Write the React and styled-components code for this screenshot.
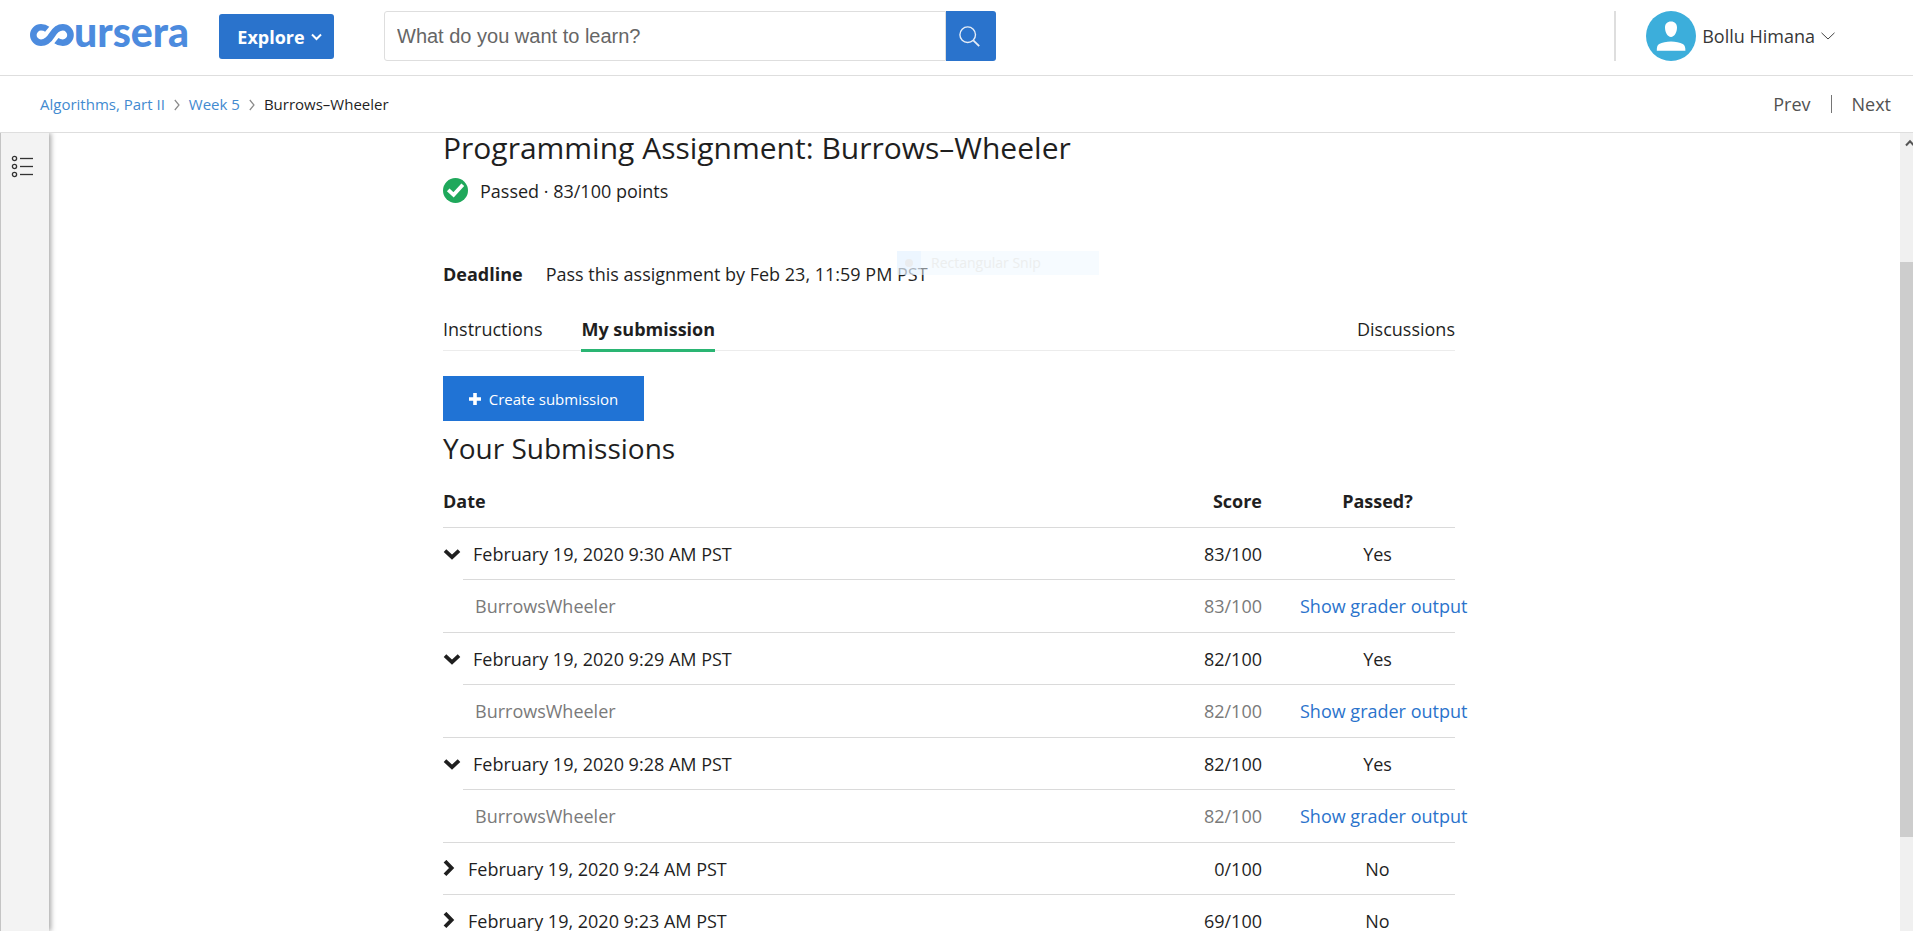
import React, { useState } from 'react';
import styled, { createGlobalStyle } from 'styled-components';

const GlobalStyle = createGlobalStyle`
  *, *::before, *::after { box-sizing: border-box; }
  body {
    margin: 0;
    background: #fff;
    color: #1f1f1f;
    font-family: "Open Sans", "Noto Sans", sans-serif;
    font-size: 18px;
    line-height: 24px;
  }
  a { color: inherit; text-decoration: none; }
  button { font: inherit; cursor: pointer; }
`;

const Shell = styled.div`
  display: flex;
  flex-direction: column;
  height: 100vh;
  overflow: hidden;
`;

/* ---------- top bar ---------- */

const TopBar = styled.header`
  display: flex;
  align-items: flex-start;
  flex: none;
  height: 76px;
  padding: 11px 78px 0 30px;
  border-bottom: 1px solid #dedede;
`;

const LogoLink = styled.a`
  display: flex;
  align-items: center;
  width: 159px;
  height: 48px;
  color: #4c8bde;
  svg { flex: none; }
`;

const LogoText = styled.span`
  font-family: Lato, sans-serif;
  font-weight: 900;
  font-size: 41px;
  line-height: 40px;
  margin-top: -6px;
`;

const ExploreButton = styled.button`
  display: flex;
  align-items: center;
  justify-content: center;
  gap: 6px;
  width: 115px;
  height: 45px;
  margin: 3px 0 0 30px;
  padding: 0 0 0 6px;
  border: 0;
  border-radius: 3px;
  background: #2a73cc;
  color: #fff;
  font-weight: 700;
`;

const SearchForm = styled.form`
  display: flex;
  width: 612px;
  height: 50px;
  margin-left: 50px;
`;

const SearchInput = styled.input`
  flex: 1;
  min-width: 0;
  padding: 0 12px;
  border: 1px solid #dedede;
  border-radius: 3px 0 0 3px;
  font-family: "Liberation Sans", sans-serif;
  font-size: 20px;
  color: #333;
  outline: none;
  &::placeholder { color: #666; opacity: 1; }
`;

const SearchButton = styled.button`
  display: grid;
  place-items: center;
  width: 50px;
  padding: 0 4px 0 0;
  border: 0;
  border-radius: 0 3px 3px 0;
  background: #2a73cc;
`;

const Account = styled.div`
  display: flex;
  height: 50px;
  margin-left: auto;
  padding-left: 30px;
  border-left: 2px solid #dedede;
`;

const AccountButton = styled.button`
  display: flex;
  align-items: center;
  padding: 0;
  border: 0;
  background: none;
  color: #373737;
  span { margin: 0 6px; }
`;

/* ---------- breadcrumb bar ---------- */

const CrumbBar = styled.div`
  display: flex;
  align-items: center;
  justify-content: space-between;
  flex: none;
  height: 57px;
  padding: 0 22px 0 40px;
  border-bottom: 1px solid #dedede;
`;

const Crumbs = styled.nav`
  display: flex;
  align-items: center;
  gap: 9px;
  font-size: 15px;
  a { color: #428ad0; }
  svg { margin-top: 2px; }
`;

const Pager = styled.nav`
  display: flex;
  align-items: center;
  color: #525252;
  a + a {
    display: flex;
    align-items: center;
  }
  a + a::before {
    content: "";
    width: 1px;
    height: 18px;
    margin: 0 20px;
    background: #757575;
  }
`;

/* ---------- body ---------- */

const Body = styled.div`
  display: flex;
  flex: 1;
  min-height: 0;
`;

const Rail = styled.aside`
  flex: none;
  width: 49px;
  padding: 22px 0 0 10px;
  border-left: 1px solid #c4c4c4;
  background: #f3f3f3;
  box-shadow: 2px 0 5px rgba(0, 0, 0, 0.35);
  clip-path: inset(0 -8px 0 0);
`;

const RailButton = styled.button`
  display: block;
  padding: 0;
  border: 0;
  background: none;
  svg { display: block; }
`;

const Viewport = styled.main`
  flex: 1;
  min-width: 0;
  padding-right: 51px;
`;

const Content = styled.div`
  max-width: 1012px;
  margin: 0 auto;
`;

const ScrollTrack = styled.div`
  display: flex;
  flex-direction: column;
  flex: none;
  width: 13px;
  background: #f0f0f0;
  overflow: hidden;
`;

const ScrollLead = styled.div`
  flex: 129 0 0;
  min-height: 0;
  padding-left: 5px;
  svg { display: block; margin-top: 5px; }
`;
const ScrollThumb = styled.div`
  flex: 575 0 0;
  background: #cdcdcd;
`;
const ScrollTail = styled.div`
  flex: 94 0 0;
`;

const Title = styled.h1`
  margin: 0;
  font-size: 30px;
  line-height: 30px;
  font-weight: 400;
`;

const Status = styled.div`
  display: flex;
  align-items: center;
  gap: 12px;
  height: 25px;
  margin-top: 15px;
`;

const Deadline = styled.div`
  position: relative;
  display: flex;
  gap: 23px;
  margin-top: 59px;
`;

const SnipGhost = styled.div`
  position: absolute;
  left: 454px;
  bottom: 11px;
  display: flex;
  align-items: center;
  width: 202px;
  height: 24px;
  background: rgba(238, 247, 255, 0.5);
  color: #eceeee;
  font-size: 14px;
`;

const SnipMark = styled.span`
  display: grid;
  place-items: center;
  width: 24px;
  height: 24px;
  margin-right: 10px;
  background: rgba(226, 240, 255, 0.4);
  &::before {
    content: "";
    width: 8px;
    height: 8px;
    border-radius: 50%;
    background: #eaecee;
  }
`;

const Tabs = styled.nav`
  display: flex;
  gap: 39px;
  height: 40px;
  margin-top: 25px;
  margin-bottom: 25px;
  border-bottom: 1px solid #ececec;
`;

const Tab = styled.a`
  height: 41px;
  padding-top: 6px;
  font-weight: ${({ $active }) => ($active ? 700 : 400)};
  border-bottom: 3px solid ${({ $active }) => ($active ? '#2ab573' : 'transparent')};
  margin-left: ${({ $end }) => ($end ? 'auto' : '0')};
`;

const CreateButton = styled.button`
  display: flex;
  align-items: center;
  justify-content: center;
  gap: 8px;
  width: 201px;
  height: 45px;
  padding: 0;
  border: 0;
  background: #2073d5;
  color: #fff;
  font-size: 15px;
`;

const SectionTitle = styled.h2`
  margin: 7px 0 0;
  font-size: 28px;
  line-height: 40px;
  font-weight: 400;
`;

const Table = styled.table`
  width: 100%;
  margin-top: 7px;
  table-layout: fixed;
  border-collapse: separate;
  border-spacing: 0;
`;

const DateCol = styled.col``;
const IndentCol = styled.col`
  width: 20px;
`;
const ScoreCol = styled.col`
  width: 160px;
`;
const PassedCol = styled.col`
  width: 155px;
`;

const HeadCell = styled.th`
  height: 52px;
  padding: ${({ $pad }) => $pad || '0'};
  text-align: ${({ $align }) => $align || 'left'};
  font-weight: 700;
`;

const Cell = styled.td`
  height: ${({ $detail }) => ($detail ? '53px' : '52px')};
  padding: ${({ $pad }) => $pad || '0'};
  border-top: ${({ $bare }) => ($bare ? '0' : '1px solid #dadada')};
  text-align: ${({ $align }) => $align || 'left'};
  color: ${({ $detail }) => ($detail ? '#7a7a7a' : '#1f1f1f')};
  white-space: nowrap;
`;

const RowToggle = styled.button`
  display: flex;
  align-items: center;
  gap: 12px;
  padding: 0;
  border: 0;
  background: none;
  color: #1f1f1f;
`;

const GraderLink = styled.a`
  color: #2a73cc;
`;

/* ---------- drawings ---------- */

const LogoMark = () => (
  <svg width="44" height="22" viewBox="0 0 44 22" fill="none" stroke="currentColor" strokeWidth="6.6" aria-hidden="true">
    <path d="M17.2 5.2C15.6 3.9 13.4 3.3 11 3.3A7.7 7.7 0 0 0 11 18.7C17 18.7 19.6 15 22 11C24.4 7 27 3.300 32.800 3.300A7.700 7.700 0 0 1 32.800 18.700C30.200 18.700 28 17.900 26.400 16.600" />
  </svg>
);

const ChevronThin = ({ width, height, d, color, weight = 1 }) => (
  <svg width={width} height={height} viewBox={`0 0 ${width} ${height}`} fill="none" stroke={color} strokeWidth={weight} aria-hidden="true">
    <path d={d} />
  </svg>
);

const CrumbArrow = () => <ChevronThin width={6} height={12} d="M.8 1L5 6L.8 11" color="#8a8a8a" weight={1.2} />;

const SearchIcon = () => (
  <svg width="21" height="21" viewBox="0 0 21 21" fill="none" stroke="#e6edf7" strokeWidth="1.4" aria-hidden="true">
    <circle cx="8.7" cy="8.7" r="7.8" />
    <path d="M14.3 14.3L20.2 20.2" strokeWidth="1.8" />
  </svg>
);

const Avatar = () => (
  <svg width="50" height="50" viewBox="0 0 50 50" aria-hidden="true">
    <circle cx="25" cy="25" r="25" fill="#3caedb" />
    <path fill="#fff" d="M25 10.5c3.8 0 6 2.4 6 6.1 0 4.6-2.5 9.4-6 9.4s-6-4.8-6-9.4c0-3.7 2.2-6.1 6-6.1zM10.8 39.7c0-3.6.4-5.6 2.4-6.7C16 31.4 20.5 30.5 25 30.5s9 .9 11.8 2.5c2 1.1 2.6 3.1 2.6 6.7z" />
  </svg>
);

const ListIcon = () => (
  <svg width="23" height="23" viewBox="0 0 23 23" fill="none" stroke="#333" strokeWidth="1.3" aria-hidden="true">
    {[3.5, 11.5, 19.5].map((y) => (
      <g key={y}>
        <circle cx="3.5" cy={y} r="2.1" />
        <path d={`M9 ${y}H22`} />
      </g>
    ))}
  </svg>
);

const PassedIcon = () => (
  <svg width="25" height="25" viewBox="0 0 25 25" aria-hidden="true">
    <circle cx="12.5" cy="12.5" r="12.5" fill="#1fa85b" />
    <path d="M5.2 11.8L10.6 16.8L19.8 6.8" fill="none" stroke="#fff" strokeWidth="3.8" />
  </svg>
);

const PlusIcon = () => (
  <svg width="12" height="12" viewBox="0 0 12 12" stroke="#fff" strokeWidth="3.6" aria-hidden="true">
    <path d="M6 0V12M0 6H12" />
  </svg>
);

const ToggleIcon = ({ open }) =>
  open ? (
    <svg width="18" height="12" viewBox="0 0 18 12" fill="none" stroke="currentColor" strokeWidth="3.8" aria-hidden="true">
      <path d="M2 2.7L9 9.1L16 2.7" />
    </svg>
  ) : (
    <svg width="13" height="18" viewBox="0 0 13 18" fill="none" stroke="currentColor" strokeWidth="3.8" aria-hidden="true">
      <path d="M2 1.2L8.6 8L2 14.8" />
    </svg>
  );

/* ---------- page ---------- */

const SUBMISSIONS = [
  { date: 'February 19, 2020 9:30 AM PST', score: '83/100', passed: 'Yes', open: true },
  { date: 'February 19, 2020 9:29 AM PST', score: '82/100', passed: 'Yes', open: true },
  { date: 'February 19, 2020 9:28 AM PST', score: '82/100', passed: 'Yes', open: true },
  { date: 'February 19, 2020 9:24 AM PST', score: '0/100', passed: 'No', open: false },
  { date: 'February 19, 2020 9:23 AM PST', score: '69/100', passed: 'No', open: false },
];

const SCORE_PAD = '0 38px 0 0';

function Submission({ item }) {
  const [open, setOpen] = useState(item.open);
  return (
    <>
      <tr>
        <Cell colSpan={2}>
          <RowToggle type="button" aria-expanded={open} onClick={() => setOpen(!open)}>
            <ToggleIcon open={open} />
            {item.date}
          </RowToggle>
        </Cell>
        <Cell $align="right" $pad={SCORE_PAD}>{item.score}</Cell>
        <Cell $align="center">{item.passed}</Cell>
      </tr>
      {open && (
        <tr>
          <Cell $detail $bare />
          <Cell $detail $pad="0 0 0 12px">BurrowsWheeler</Cell>
          <Cell $detail $align="right" $pad={SCORE_PAD}>{item.score}</Cell>
          <Cell $detail><GraderLink href="#grader">Show grader output</GraderLink></Cell>
        </tr>
      )}
    </>
  );
}

export default function App() {
  return (
    <Shell>
      <GlobalStyle />
      <TopBar>
        <LogoLink href="#home" aria-label="coursera">
          <LogoMark />
          <LogoText>ursera</LogoText>
        </LogoLink>
        <ExploreButton type="button">
          Explore
          <ChevronThin width={11} height={8} d="M1 1.5L5.5 6L10 1.5" color="#fff" weight={2} />
        </ExploreButton>
        <SearchForm role="search" onSubmit={(e) => e.preventDefault()}>
          <SearchInput type="text" aria-label="Search" placeholder="What do you want to learn?" />
          <SearchButton type="submit" aria-label="Submit search"><SearchIcon /></SearchButton>
        </SearchForm>
        <Account>
          <AccountButton type="button">
            <Avatar />
            <span>Bollu Himana</span>
            <ChevronThin width={14} height={8} d="M.5 .8L7 7L13.5 .8" color="#444" />
          </AccountButton>
        </Account>
      </TopBar>

      <CrumbBar>
        <Crumbs aria-label="Breadcrumb">
          <a href="#course">Algorithms, Part II</a>
          <CrumbArrow />
          <a href="#week">Week 5</a>
          <CrumbArrow />
          <span>Burrows–Wheeler</span>
        </Crumbs>
        <Pager aria-label="Item">
          <a href="#prev">Prev</a>
          <a href="#next">Next</a>
        </Pager>
      </CrumbBar>

      <Body>
        <Rail>
          <RailButton type="button" aria-label="Course outline"><ListIcon /></RailButton>
        </Rail>
        <Viewport>
          <Content>
            <Title>Programming Assignment: Burrows–Wheeler</Title>
            <Status>
              <PassedIcon />
              <span>Passed · 83/100 points</span>
            </Status>
            <Deadline>
              <strong>Deadline</strong>
              <span>Pass this assignment by Feb 23, 11:59 PM PST</span>
              <SnipGhost><SnipMark />Rectangular Snip</SnipGhost>
            </Deadline>
            <Tabs>
              <Tab href="#instructions">Instructions</Tab>
              <Tab href="#submission" $active aria-current="page">My submission</Tab>
              <Tab href="#discussions" $end>Discussions</Tab>
            </Tabs>
            <CreateButton type="button"><PlusIcon />Create submission</CreateButton>
            <SectionTitle>Your Submissions</SectionTitle>
            <Table>
              <colgroup>
                <IndentCol />
                <DateCol />
                <ScoreCol />
                <PassedCol />
              </colgroup>
              <thead>
                <tr>
                  <HeadCell scope="col" colSpan={2}>Date</HeadCell>
                  <HeadCell scope="col" $align="right" $pad={SCORE_PAD}>Score</HeadCell>
                  <HeadCell scope="col" $align="center">Passed?</HeadCell>
                </tr>
              </thead>
              <tbody>
                {SUBMISSIONS.map((item) => <Submission key={item.date} item={item} />)}
              </tbody>
            </Table>
          </Content>
        </Viewport>
        <ScrollTrack aria-hidden="true">
          <ScrollLead>
            <ChevronThin width={10} height={10} d="M1 7.5L5 3.2L9 7.5" color="#555" weight={2} />
          </ScrollLead>
          <ScrollThumb />
          <ScrollTail />
        </ScrollTrack>
      </Body>
    </Shell>
  );
}
